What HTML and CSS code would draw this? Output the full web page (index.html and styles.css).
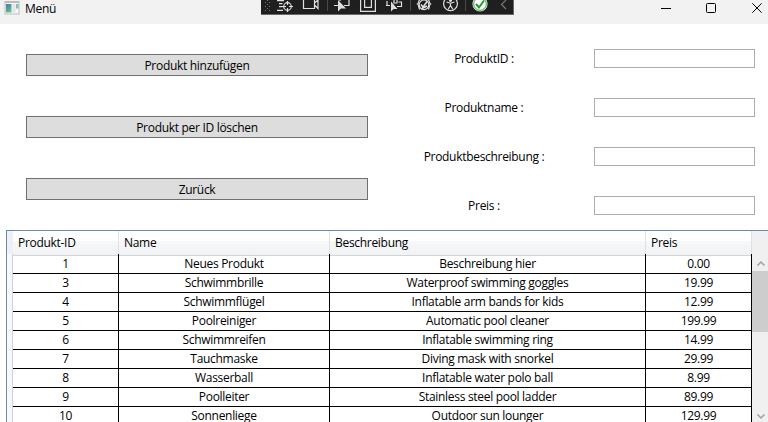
FILE: index.html
```html
<!DOCTYPE html>
<html lang="de">
<head>
<meta charset="utf-8">
<title>Menü</title>
<link rel="stylesheet" href="styles.css">
</head>
<body>
<header class="titlebar">
  <svg class="app-icon" width="16" height="14" viewBox="0 0 16 14"><defs><linearGradient id="g" x2="0.6" y2="1"><stop offset="0" stop-color="#4a78b8"/><stop offset="1" stop-color="#68bd80"/></linearGradient></defs><rect x=".5" y="0" width="15" height="13.5" fill="#b8bdbf"/><rect x="1.5" y="2" width="13" height="10.5" fill="#f7f7f7"/><rect x="2" y="3" width="5.5" height="8.5" fill="url(#g)"/><rect x="8.5" y="3" width="3" height="8.5" fill="#e4e4e4"/><rect x="12" y="3" width="2.5" height="4.5" fill="#7fc1aa"/></svg>
  <h1 class="title">Menü</h1>
  <svg class="window-controls" width="110" height="18" viewBox="658 0 110 18" fill="none" stroke="#000" stroke-width="1"><path d="M661 8.5h10"/><rect x="706.5" y="3.5" width="9" height="9" rx="1"/><path d="M752.3 3.3l9.4 9.4m0-9.4l-9.4 9.4"/></svg>
  <div class="debug-bar">
    <svg width="252" height="14" viewBox="261 0 252 14" fill="none" stroke="#e0e0e0" stroke-width="1.2">
      <path stroke="#777" stroke-width="1" stroke-dasharray="1 3" d="M265.5 2v11M269.5 2v11M267.5 0v11"/>
      <path d="M277 .6h7M279 3.6h3.5M279 6.6h3.5M277 10.4h6"/><circle cx="287.500" cy="6.500" r="3.800"/><path d="M287.500 1v4M287.500 8v4M282 6.500h4M289 6.500h4"/>
      <path d="M303.500 0v8.500h11V0M314.500 3l3.500-3M314.500 5l3.500 3.500V0"/>
      <path stroke="#4a4a4a" stroke-width="1" d="M327.500 0v11M410.500 0v11M465.500 0v11"/>
      <path d="M334 5.500h4M344 5.500h5V0M340 0v1"/><path fill="#ddd" stroke="none" d="M338 0v11.500l3-3h5L338 0z"/>
      <path d="M360.600 0v11.400h14.800V0"/><path d="M364.600 0v7.400h6.800V0"/>
      <path d="M386 5.500h4M387 1v4M397 6.500h4.500V2h-3M394 0v3h3V0"/><path fill="#ddd" stroke="none" d="M391 1.500v10l2.500-2.500h4L391 1.500z"/>
      <path d="M420 0c-2 0-.5 3-2.500 4 2 1 .5 5 2.500 5.500M428 0c2 0 .5 3 2.500 4-2 1-.5 5-2.500 5.500"/><circle cx="424" cy="4.800" r="4.800"/><path stroke-width="1.500" d="M421 4.500l2 2.500 4.500-6M421 9l6-3"/>
      <circle cx="450.500" cy="3.700" r="6.900"/><path d="M446.500 2l4 1.200 4-1.200M450.500 3v2.500l-2.500 4M450.500 5.500l2.500 4"/><circle cx="450.500" cy=".3" r="1" fill="#ddd"/>
      <circle cx="480" cy="4" r="7" fill="#fff" stroke="#d8eed9"/><circle cx="480" cy="4" r="6.300" stroke="#43a449" stroke-width="1"/><path stroke="#259b31" stroke-width="2" d="M476 4l3 3.500 5-7"/>
      <path stroke="#777" d="M506 0l-4.500 4.500 4.500 4.500"/>
    </svg>
  </div>
</header>
<main>
  <section class="controls">
    <div class="actions">
      <button type="button">Produkt hinzufügen</button>
      <button type="button">Produkt per ID löschen</button>
      <button type="button">Zurück</button>
    </div>
    <form class="fields">
      <label><span>ProduktID :</span><input type="text"></label>
      <label><span>Produktname :</span><input type="text"></label>
      <label><span>Produktbeschreibung :</span><input type="text"></label>
      <label><span>Preis :</span><input type="text"></label>
    </form>
  </section>
  <section class="datagrid">
    <div class="rows">
      <div class="row head"><i></i><b>Produkt-ID</b><b>Name</b><b>Beschreibung</b><b>Preis</b></div>
      <div class="row"><i></i><span>1</span><span>Neues Produkt</span><span>Beschreibung hier</span><span>0.00</span></div>
      <div class="row"><i></i><span>3</span><span>Schwimmbrille</span><span>Waterproof swimming goggles</span><span>19.99</span></div>
      <div class="row"><i></i><span>4</span><span>Schwimmflügel</span><span>Inflatable arm bands for kids</span><span>12.99</span></div>
      <div class="row"><i></i><span>5</span><span>Poolreiniger</span><span>Automatic pool cleaner</span><span>199.99</span></div>
      <div class="row"><i></i><span>6</span><span>Schwimmreifen</span><span>Inflatable swimming ring</span><span>14.99</span></div>
      <div class="row"><i></i><span>7</span><span>Tauchmaske</span><span>Diving mask with snorkel</span><span>29.99</span></div>
      <div class="row"><i></i><span>8</span><span>Wasserball</span><span>Inflatable water polo ball</span><span>8.99</span></div>
      <div class="row"><i></i><span>9</span><span>Poolleiter</span><span>Stainless steel pool ladder</span><span>89.99</span></div>
      <div class="row"><i></i><span>10</span><span>Sonnenliege</span><span>Outdoor sun lounger</span><span>129.99</span></div>
    </div>
    <div class="scrollbar">
      <svg width="16" height="17" viewBox="0 0 16 17" fill="none" stroke="#a0a0a0" stroke-width="1.500"><path d="M5.500 11.500l3.500-3.500 3.500 3.500"/></svg>
      <div class="thumb"></div>
      <svg width="16" height="17" viewBox="0 0 16 17" fill="none" stroke="#a0a0a0" stroke-width="1.500"><path d="M5.500 9.500l3.500 3.500 3.500-3.500"/></svg>
    </div>
  </section>
</main>
</body>
</html>
```
FILE: styles.css
```css
* { box-sizing: border-box; }
body {
  margin: 0;
  width: 768px;
  height: 422px;
  overflow: hidden;
  background: #fff;
  color: #000;
  font: 12px/16px "Open Sans", "Noto Sans", sans-serif;
  letter-spacing: -0.3px;
}
.titlebar {
  position: relative;
  display: flex;
  height: 24px;
  background: #f2f2f2;
}
.app-icon { margin: 1px 0 0 4px; }
.title { margin: 1px auto 0 5px; font: inherit; }
.debug-bar {
  position: absolute;
  left: 261px;
  top: 0;
  width: 253px;
  height: 15px;
  background: #1f1f1f;
  border: solid #696969;
  border-width: 0 1px 1px 0;
}
.debug-bar svg { display: block; }
.controls { display: flex; height: 206px; }
.actions {
  display: flex;
  flex-direction: column;
  gap: 40px;
  width: 342px;
  margin: 30px 0 0 26px;
}
button {
  height: 22px;
  padding: 2px 0 0;
  border: 1px solid #707070;
  background: #ddd;
  color: #000;
  font: inherit;
  letter-spacing: inherit;
}
.fields {
  display: flex;
  flex-direction: column;
  gap: 30px;
  margin: 25px 0 0 6px;
}
label { display: flex; height: 19px; align-items: center; }
label span { width: 220px; text-align: center; }
input {
  width: 161px;
  height: 19px;
  padding: 0;
  border: 1px solid #abadb3;
  background: #fff;
}
.datagrid {
  display: flex;
  height: 192px;
  margin-left: 6px;
  overflow: hidden;
  border: solid #688caf;
  border-width: 1px 0 0 1px;
}
.rows { width: 745px; }
.row {
  display: grid;
  grid-template-columns: 6px 106px 211px 316px 106px;
  height: 19px;
}
.row i { border-right: 1px solid #d0d0d0; border-bottom: 1px solid #e3e3e3; background: #f9f9f9; }
.row span {
  border-right: 1px solid #000;
  border-bottom: 1px solid #000;
  text-align: center;
  line-height: 19px;
}
.head { height: 23px; }
.row.head i { background: #f0f0f2; border: 0; }
.head b {
  padding-left: 5px;
  font-weight: normal;
  line-height: 24px;
  border-right: 1px solid #dfe1e4;
  border-bottom: 1px solid #d2d4d6;
  background: linear-gradient(#fff 0 40%, #f7f8fa 41%, #f1f2f4);
}
.scrollbar {
  display: flex;
  flex-direction: column;
  width: 16px;
  height: 191px;
  padding-top: 23px;
  background: #f0f0f0;
}
.scrollbar svg { flex: none; }
.thumb { height: 61px; margin-bottom: auto; background: #cdcdcd; }
```
